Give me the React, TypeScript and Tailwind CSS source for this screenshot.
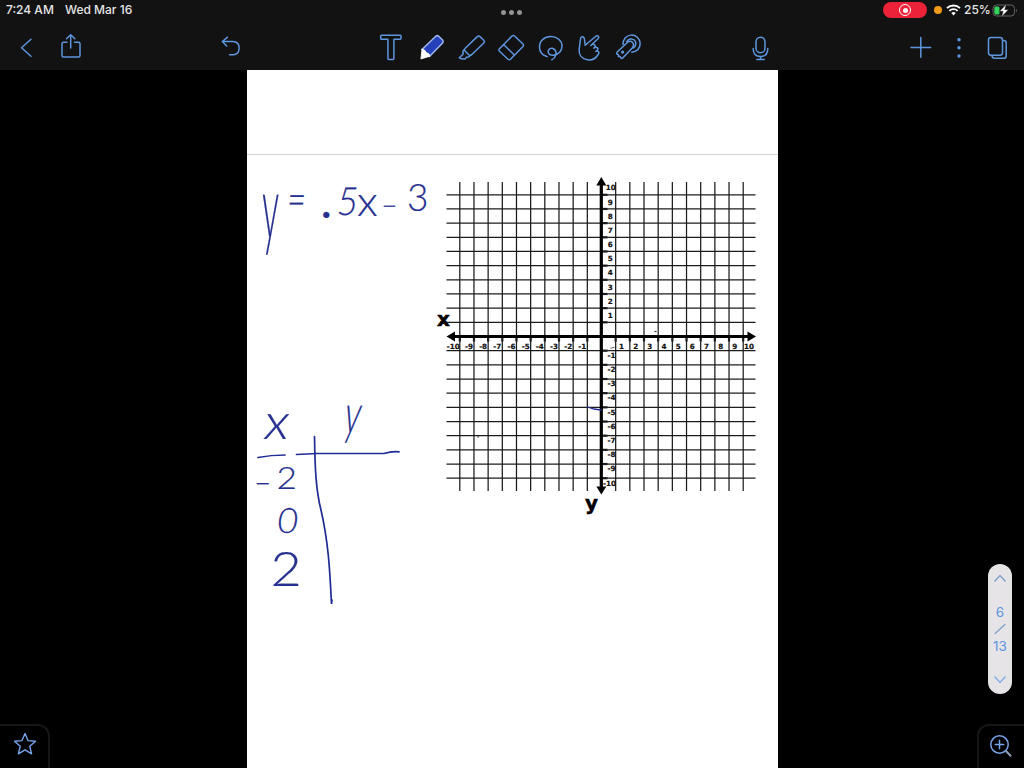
import type { ReactNode } from "react";
import { clsx } from "clsx";

interface IconProps {
  label: string;
  className?: string;
  children: ReactNode;
}

const ToolIcon = ({ label, className, children }: IconProps) => (
  <button aria-label={label} className={clsx("shrink-0 text-[#5e96dd]", className)}>
    <svg
      width="30"
      height="30"
      viewBox="0 0 30 30"
      fill="none"
      stroke="currentColor"
      strokeWidth="1.5"
      strokeLinecap="round"
      strokeLinejoin="round"
    >
      {children}
    </svg>
  </button>
);

function StatusBar() {
  return (
    <div className="flex h-5 items-center pl-1.5 pr-1.5 text-[12px] font-medium text-[#e6e6e6]">
      <span className="w-[59px] whitespace-nowrap">7:24 AM</span>
      <span className="w-[436px] whitespace-nowrap">Wed Mar 16</span>
      <div className="mt-[5px] flex gap-[3px]">
        <i className="size-[5px] rounded-full bg-[#929292]" />
        <i className="size-[5px] rounded-full bg-[#929292]" />
        <i className="size-[5px] rounded-full bg-[#929292]" />
      </div>
      <div className="ml-auto flex items-center">
        <div className="flex h-4 w-11 items-center justify-center rounded-full bg-[#ec2338]">
          <div className="flex size-3 items-center justify-center rounded-full border-[1.5px] border-white">
            <i className="size-[5px] rounded-full bg-white" />
          </div>
        </div>
        <i className="ml-[7px] size-2 rounded-full bg-[#f19a1a]" />
        <svg className="ml-1" width="15" height="12" viewBox="0 0 15 12" fill="none" stroke="#fff" strokeWidth="1.9">
          <path d="M1 4.2 a9.2 9.2 0 0 1 13 0" />
          <path d="M3.4 6.8 a5.8 5.8 0 0 1 8.2 0" />
          <path d="M7.5 11.4 L5.3 9 a3.1 3.1 0 0 1 4.4 0 Z" fill="#fff" stroke="none" />
        </svg>
        <span className="ml-[3px] w-[28px] whitespace-nowrap">25%</span>
        <svg width="26" height="13" viewBox="0 0 26 13">
          <rect x="1" y="1" width="21.5" height="11" rx="3.5" fill="none" stroke="#656565" />
          <path d="M24 4.5 q1.6 2 0 4 Z" fill="#656565" />
          <rect x="2.3" y="2.4" width="5.2" height="8.2" rx="1.5" fill="#35d15a" />
          <path d="M14.3 0.3 L7.6 7.3 h3.6 L9.6 12.8 L16.4 5.7 h-3.7 Z" fill="#fff" stroke="#121212" strokeWidth="0.4" />
        </svg>
      </div>
    </div>
  );
}

function Toolbar() {
  return (
    <div className="flex h-[50px] items-center pl-3 pt-1">
      <ToolIcon label="Back">
        <path d="M19 7.2 L9.5 15.7 L19 24.2" />
      </ToolIcon>
      <ToolIcon label="Share" className="ml-3.5">
        <path d="M11 10.3 H7.5 Q6 10.3 6 11.8 V23.5 Q6 25 7.5 25 H22.5 Q24 25 24 23.5 V11.8 Q24 10.3 22.5 10.3 H18.5" />
        <path d="M14.7 16 V2.8 M10.5 6.7 L14.7 2.8 L18.9 6.7" />
      </ToolIcon>
      <ToolIcon label="Undo" className="ml-[130px]">
        <path d="M11.5 5.2 L6.3 9.5 L10.7 14 M6.3 9.5 H17 Q23 9.8 23 15.5 V17 Q22.7 22.5 17.3 22.7 H13.5" />
      </ToolIcon>

      <ToolIcon label="Text" className="ml-[130px]">
        <path d="M5.5 3.2 H24.3 Q25 3.2 25 4 V6.3 Q25 7.2 24.2 7.2 H17.9 V26.5 Q17.9 27.4 17 27.4 H12.8 Q11.9 27.4 11.9 26.5 V7.2 H5.5 Q4.7 7.2 4.7 6.4 V4 Q4.7 3.2 5.5 3.2 Z" />
      </ToolIcon>
      <ToolIcon label="Pen" className="ml-[11px]">
        <path d="M5 17.5 L18.8 4.2 Q20.3 3 21.7 4.2 L25.6 8 Q26.8 9.5 25.6 11 L12.5 24.5 Z" fill="#2540b8" stroke="#9fb7ee" />
        <path d="M5 17.3 L3.9 27 L13 24.2 Q12.5 21 9.3 20.7 Q8.5 17.5 5 17.3 Z" fill="#fff" stroke="#fff" strokeWidth="0.8" />
      </ToolIcon>
      <ToolIcon label="Highlighter" className="ml-2.5">
        <path d="M8 16.5 L20.3 4.6 Q21.7 3.4 23 4.6 L26.8 8.3 Q28.1 9.7 26.8 11 L14.3 23 Q13 23.8 11.8 22.7 L8 19 Q6.9 17.6 8 16.5 Z" />
        <path d="M7.3 17.5 Q5.2 19 6.2 22 L2.3 25.8 Q4.8 27.5 8.2 26.9 L9.5 25.2 Q12 25.5 13.4 23.3" />
      </ToolIcon>
      <ToolIcon label="Eraser" className="ml-[9px]">
        <path d="M3.5 16.7 L16 4 Q17.3 2.9 18.6 4 L27 12 Q28 13.3 27 14.5 L14.5 27.2 Q13.2 28.3 12 27.2 L3.5 19.3 Q2.4 18 3.5 16.7 Z M7.8 12.7 L18.5 23.2" />
      </ToolIcon>
      <ToolIcon label="Lasso" className="ml-[9px]">
        <path d="M12.2 24.6 C6.8 23 4.5 19 4.5 15 C4.5 8.5 9.5 4.6 15.7 4.6 C22 4.6 27 8.5 27 14 C27 18.5 24 22.5 18.8 23.2 C15 23.5 12.9 21.8 13.2 19.3 C13.6 16.8 16 15.6 18 16.5 C20.7 17.8 21.5 20.3 20.7 23.2 C20.2 25.3 18.8 27 16.8 27.8" />
      </ToolIcon>
      <ToolIcon label="Point" className="ml-[9px]">
        <path d="M5.2 17 L6.6 6.3 Q7.2 4.3 9 4.8 Q10.2 5.3 10.5 7.5 L11.2 13.3 L21.8 4.2 Q23.3 3.1 24.4 4.3 Q25.3 5.5 24 6.8 L16.8 13.5 Q18 11.8 20 12.5 Q21.9 13.5 20.7 15.2 L19.9 16.1 Q21.5 14.6 23.2 15.6 Q24.5 16.8 23.2 18.3 L21.8 19.4 Q23.5 18.5 24.6 19.7 Q25.6 21 24.2 22.5 C21.5 26.8 17.5 28.6 13.2 27.8 C7.5 26.7 4.6 22.3 5.2 17 Z" />
      </ToolIcon>
      <ToolIcon label="Tape" className="ml-[9px]">
        <path d="M10 12.5 A8.6 8.6 0 1 1 18.8 20.3 M13.8 9.6 A4.8 4.8 0 1 1 20.3 16" />
        <path d="M4.2 20 L14.6 10.2 Q17.3 8.2 19.7 10.5 Q21.8 13.3 19.5 15.8 L9.7 26 Q8.8 26.8 7.8 26 L7.2 24.5 L5.5 24.6 L5.6 22.8 L4 22.3 Q3.3 21 4.2 20 Z" />
        <circle cx="9.6" cy="20.1" r="0.9" />
      </ToolIcon>

      <ToolIcon label="Record" className="ml-[102px]">
        <rect x="11" y="5.2" width="9" height="15.5" rx="4.5" />
        <path d="M8.2 16.5 C8.2 21.8 11 24.5 15.5 24.5 S22.8 21.8 22.8 16.5 M15.5 24.5 V27.5 M11.8 27.5 H19.2" />
      </ToolIcon>
      <ToolIcon label="Add" className="ml-[131px]">
        <path d="M14.8 5.5 V25.2 M5 15.4 H24.6" />
      </ToolIcon>
      <ToolIcon label="More" className="ml-2">
        <g fill="currentColor" stroke="none">
          <circle cx="15" cy="7.7" r="1.7" />
          <circle cx="15" cy="15.8" r="1.7" />
          <circle cx="15" cy="24" r="1.7" />
        </g>
      </ToolIcon>
      <ToolIcon label="Pages" className="ml-2">
        <rect x="6.5" y="5.4" width="14" height="17.8" rx="2.4" />
        <path d="M20.6 8.5 H21.7 Q24.2 8.5 24.2 11 V23.7 Q24.2 26.3 21.7 26.3 H12.5 Q10 26.3 10 23.5" />
      </ToolIcon>
    </div>
  );
}

const STEP = 14.17;
const CENTER = 165.5;
const TICKS = Array.from({ length: 10 }, (_, i) => i + 1);

// Blank -10..10 coordinate plane
function CoordinatePlane() {
  const lines = [...TICKS.map((n) => -n), ...TICKS];

  return (
    <svg
      className="absolute left-[189px] top-[16px]"
      width="330"
      height="350"
      viewBox="0 0 330 350"
      fontFamily="'DejaVu Sans', sans-serif"
      fontWeight="700"
    >
      <g stroke="#1c1c1c" strokeWidth="1.25">
        {lines.map((n) => (
          <g key={n}>
            <path d={`M${CENTER + n * STEP} 11 V320`} />
            <path d={`M10.5 ${CENTER - n * STEP} H319.5`} />
            <path d={`M${CENTER + n * STEP} 165 V170.5`} strokeWidth="2.2" />
            <path d={`M165 ${CENTER - n * STEP} H171.5`} strokeWidth="2.2" />
          </g>
        ))}
      </g>
      <g stroke="#000" strokeWidth="3.2">
        <path d="M15 165.5 H315" />
        <path d="M165.3 10 V319" />
      </g>
      <g fill="#000">
        <path d="M165.3 6 L170.3 14.5 H160.3 Z" />
        <path d="M165.3 323.5 L170.3 315.5 H160.3 Z" />
        <path d="M10.5 165.5 L19 160.5 V170.5 Z" />
        <path d="M320 165.5 L311.5 160.5 V170.5 Z" />
      </g>
      <g fontSize="7.2" textAnchor="middle" fill="#111" stroke="#111" strokeWidth="0.2">
        {TICKS.map((n) => (
          <g key={n}>
            <text x={CENTER + n * STEP + 5.8} y="178">{n}</text>
            <text x={CENTER - n * STEP - (n === 10 ? 6.6 : 5)} y="178">{-n}</text>
            <text x={n === 10 ? 174.8 : 174.3} y={CENTER - n * STEP - 4.4}>{n}</text>
            <text x={n === 10 ? 173.6 : 175.5} y={CENTER + n * STEP + 7.3}>{-n}</text>
          </g>
        ))}
      </g>
      <text x="1" y="155" fontSize="20" stroke="#000" strokeWidth="0.5">x</text>
      <text x="149" y="338.5" fontSize="20" stroke="#000" strokeWidth="0.5">y</text>
      <g stroke="#333" strokeWidth="1.2">
        <path d="M218.5 160.5 h2" />
        <path d="M41.5 265.8 h1.5" />
        <path d="M174.5 177.3 l4 -1" strokeWidth="0.8" />
      </g>
    </svg>
  );
}

interface GlyphProps {
  x: number;
  y: number;
  size: number;
  sx?: number;
  sy?: number;
  skew?: number;
  children: string;
}

// One handwritten character: stretched and slanted around its own baseline
const Glyph = ({ x, y, size, sx = 1, sy = 1, skew = 0, children }: GlyphProps) => (
  <text fontSize={size} transform={`translate(${x} ${y}) skewX(${skew}) scale(${sx} ${sy})`}>
    {children}
  </text>
);

// Pen layer: the equation, its table of values and a stray stroke on the graph
function InkLayer() {
  return (
    <svg
      className="absolute -top-10 left-0"
      width="531"
      height="653"
      viewBox="0 -40 531 653"
      fontFamily="Lato, sans-serif"
      fontWeight="300"
      fill="#26308f"
      stroke="#26308f"
      strokeWidth="0.2"
    >
      <Glyph x={14.5} y={84} size={54} sx={0.62} sy={1.65} skew={-1}>y</Glyph>
      <Glyph x={39} y={61} size={32} sy={1.5} skew={-5}>=</Glyph>
      <g fontWeight="700">
        <Glyph x={74.5} y={63} size={40}>.</Glyph>
      </g>
      <Glyph x={89} y={60} size={39} sx={0.88} skew={-8}>5</Glyph>
      <Glyph x={110} y={61} size={42} sx={1.05}>x</Glyph>
      <Glyph x={133} y={60} size={30} sx={0.95} skew={-8}>–</Glyph>
      <Glyph x={160} y={56} size={37}>3</Glyph>

      <Glyph x={15.5} y={284} size={50} sx={1.05} skew={-8}>x</Glyph>
      <Glyph x={95} y={278} size={44} sx={0.72} sy={1.25} skew={-10}>y</Glyph>
      <Glyph x={7} y={337} size={30}>–</Glyph>
      <Glyph x={29.5} y={334} size={32} sx={1.1}>2</Glyph>
      <Glyph x={29.5} y={378} size={35} skew={-6}>0</Glyph>
      <Glyph x={23.5} y={431} size={48} sx={1.12}>2</Glyph>

      <g fill="none" stroke="#1f2c94" strokeWidth="1.7" strokeLinecap="round">
        <path d="M11 302.5 Q24 300 38 300" />
        <path d="M49.5 299.5 L70 298.5 H137 Q145 296 152 296.8" />
        <path d="M67.5 281.5 C68 315 69 335 74 355 C82 390 83 420 84.5 449 L85 445" />
        <path d="M340.5 252 L347 254 L354 255" strokeWidth="1.3" />
      </g>
    </svg>
  );
}

function PageNavigator() {
  return (
    <div className="mr-3 flex h-[130px] w-6 flex-col items-center rounded-full bg-[#e7e4e8] text-[13.5px] leading-4 text-[#5b95e0]">
      <svg className="mt-2.5" width="12" height="9" viewBox="0 0 12 9" fill="none" stroke="#7d9dcb" strokeWidth="1.3">
        <path d="M0.5 7.5 L6 1.5 L11.5 7.5" />
      </svg>
      <span className="mt-[21px]">6</span>
      <svg className="my-[3px]" width="12" height="12" viewBox="0 0 12 12" stroke="#7d9dcb" strokeWidth="1.2">
        <path d="M0.8 10.8 L11.2 1.2" />
      </svg>
      <span>13</span>
      <svg className="mt-[21px]" width="12" height="9" viewBox="0 0 12 9" fill="none" stroke="#7eabeb" strokeWidth="1.3">
        <path d="M0.5 1.5 L6 7.5 L11.5 1.5" />
      </svg>
    </div>
  );
}

export default function App() {
  return (
    <div className="flex h-screen w-full flex-col overflow-hidden bg-black font-['Inter',sans-serif]">
      <header className="h-[70px] shrink-0 bg-[#121212]">
        <StatusBar />
        <Toolbar />
      </header>

      <main className="flex flex-1">
        <aside className="flex w-[247px] items-end">
          <button
            aria-label="Favorites"
            className="flex h-11 w-[50px] items-center justify-center rounded-tr-xl border-r-2 border-t-2 border-[#161616] pb-1.5 pl-0.5 text-[#76a4e8]"
          >
            <svg width="24" height="24" viewBox="0 0 24 24" fill="none" stroke="currentColor" strokeWidth="1.4" strokeLinejoin="round">
              <path d="M12 1.5 L15 8.6 L22.5 9.3 L16.8 14.3 L18.6 21.8 L12 17.8 L5.4 21.8 L7.2 14.3 L1.5 9.3 L9 8.6 Z" />
            </svg>
          </button>
        </aside>

        <section className="flex w-[531px] flex-col bg-white">
          <div className="h-[85px] border-b border-[#d2d2d2]" />
          <div className="relative flex-1">
            <CoordinatePlane />
            <InkLayer />
          </div>
        </section>

        <aside className="flex flex-1 flex-col items-end justify-end">
          <PageNavigator />
          <button
            aria-label="Zoom"
            className="mt-[30px] flex h-11 w-[47px] items-center justify-center rounded-tl-xl border-l-2 border-t-2 border-[#161616] pb-0.5 pr-0.5 text-[#76a4e8]"
          >
            <svg width="24" height="24" viewBox="0 0 24 24" fill="none" stroke="currentColor" strokeWidth="1.5" strokeLinecap="round">
              <circle cx="10.5" cy="10.5" r="8.7" />
              <path d="M10.5 6.2 V14.8 M6.2 10.5 H14.8" />
              <path d="M17 17 L21.5 21.8" stroke="#8d9fb8" strokeWidth="2" />
            </svg>
          </button>
        </aside>
      </main>
    </div>
  );
}
